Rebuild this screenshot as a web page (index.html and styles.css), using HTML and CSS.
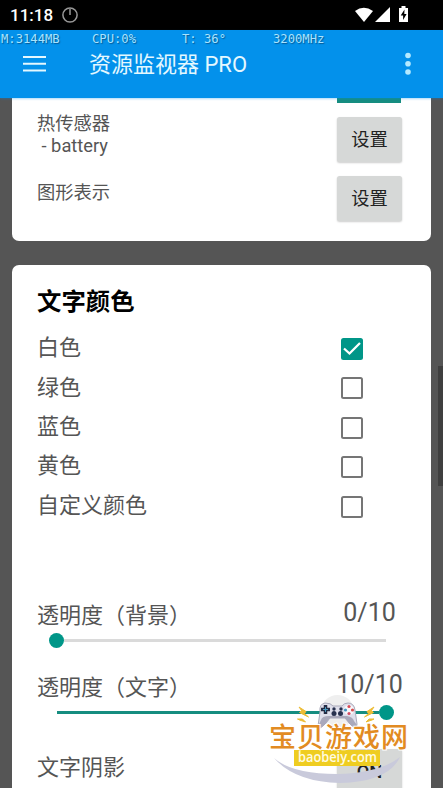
FILE: index.html
```html
<!DOCTYPE html>
<html lang="zh-CN">
<head>
<meta charset="utf-8">
<title>资源监视器 PRO</title>
<link rel="stylesheet" href="styles.css">
</head>
<body>
<div class="screen">
  <div class="status">
    <span class="clock">11:18</span>
    <svg class="power" width="16" height="16" viewBox="0 0 16 16"><circle cx="8" cy="8" r="7.1"/><path d="M8 2v6"/></svg>
    <svg class="signals" width="56" height="18" viewBox="0 0 56 18">
      <path d="M1 5Q9.700-1.500 19 5L10 16Z"/>
      <path d="M36 1V16H21Z"/>
      <path d="M47.500 0h4v2h2.500v14H45V2h2.500Z"/>
      <path class="bolt" d="M50.500 3.500L46.700 9.500h2.400v4.500l3.500-6h-2.300Z"/>
    </svg>
  </div>
  <header class="appbar">
    <div class="metrics"><span>M:3144MB</span><span>CPU:0%</span><span>T: 36°</span><span>3200MHz</span></div>
    <div class="toolbar">
      <svg class="menu" width="23" height="16" viewBox="0 0 23 16"><path d="M0 1h23M0 7.700h23M0 14.500h23"/></svg>
      <h1>资源监视器 PRO</h1>
      <svg class="more" width="6" height="24" viewBox="0 0 6 24"><circle cx="3" cy="3.500" r="2.800"/><circle cx="3" cy="11.700" r="2.800"/><circle cx="3" cy="20" r="2.800"/></svg>
    </div>
  </header>
  <main>
    <section class="card sensors">
      <div class="tab"></div>
      <div class="row"><p>热传感器<br>&nbsp;- battery</p><button>设置</button></div>
      <div class="row second"><p>图形表示</p><button>设置</button></div>
    </section>
    <section class="card colors">
      <h2>文字颜色</h2>
      <div class="option"><span>白色</span><i class="box checked"><svg width="22" height="22" viewBox="0 0 22 22"><path d="M3 10.500L8.500 15.500L19 5"/></svg></i></div>
      <div class="option"><span>绿色</span><i class="box"></i></div>
      <div class="option"><span>蓝色</span><i class="box"></i></div>
      <div class="option"><span>黄色</span><i class="box"></i></div>
      <div class="option"><span>自定义颜色</span><i class="box"></i></div>
      <div class="setting first"><div class="caption"><span>透明度（背景）</span><b>0/10</b></div><div class="slider"><i class="thumb"></i><i class="track"></i></div></div>
      <div class="setting"><div class="caption"><span>透明度（文字）</span><b>10/10</b></div><div class="slider full"><i class="track"></i><i class="thumb"></i></div></div>
      <div class="shadow"><span>文字阴影</span><button>ON</button></div>
    </section>
  </main>
  <div class="scrollbar"></div>
  <svg class="brand" width="150" height="98" viewBox="260 690 150 98">
    <circle cx="337.500" cy="711.500" r="16.500" fill="#efefef"/>
    <path d="M274 758Q292 774 337 774Q380 773 400 757Q388 782 340 783Q295 782 274 758Z" fill="#c9cadb"/>
    <path d="M299 707l7 4.500-1.500 2 4 3.500-9-4.500 2-2ZM374 707l-7 4.500 1.500 2-4 3.500 9-4.500-2-2ZM297.500 719l5 0 3 3-6-2ZM374 719l-5 0-3 3 6-2Z" fill="#edbd36" stroke="#edbd36" stroke-width="1"/>
    <path d="M325 703Q319 704 320 712L318 726Q319 731 326 723L330 718H345L350 724Q357 731 357 724L355 710Q354 703 348 703Q344 703 342 706H333Q331 703 325 703Z" fill="#dfdfeb" stroke="#aaaaba" stroke-width="1"/>
    <path d="M321 720Q322 716 329 716H347Q353 717 354 721L357 725Q354 730 349 723L345 718H330L325 724Q319 730 318 726Z" fill="#aaa9bb"/>
    <path d="M325.500 705v9M321 709.500h9" stroke="#252d46" stroke-width="3.500"/>
    <path d="M325.500 707v5M323 709.500h5" stroke="#4797bc" stroke-width="1"/>
    <g fill="#28314e"><circle cx="334" cy="709" r="1.700"/><circle cx="341" cy="709" r="1.700"/><circle cx="334" cy="713.500" r="2.500"/><circle cx="340.500" cy="713.500" r="2.500"/></g>
    <circle cx="349" cy="710" r="5" fill="#f8f8fb"/>
    <circle cx="349" cy="706.500" r="1.600" fill="#da4c56"/><circle cx="349" cy="713.500" r="1.600" fill="#d34d64"/><circle cx="345.500" cy="710" r="1.600" fill="#4297c2"/><circle cx="352.500" cy="710" r="1.600" fill="#d54d4e"/>
    <rect x="294" y="750" width="86" height="16" fill="#efcd21"/>
    <text class="brandname" x="269" y="746.500" textLength="139">宝贝游戏网</text>
    <text class="domain" x="298" y="762" textLength="79" lengthAdjust="spacingAndGlyphs">baobeiy.com</text>
  </svg>
</div>
</body>
</html>
```
FILE: styles.css
```css
* { box-sizing: border-box; }
body { margin: 0; background: #555; font-family: Roboto, "Noto Sans CJK SC", sans-serif; color: #555; }
.screen { position: relative; width: 443px; height: 788px; overflow: hidden; display: flex; flex-direction: column; }
.status { height: 29.5px; flex: none; background: #000; display: flex; align-items: center; padding: 0 33px 0 10px; color: #fff; }
.clock { font-size: 17px; font-weight: 500; line-height: 30px; width: 52px; }
.power { fill: none; stroke: #999; stroke-width: 1.5; }
.signals { margin-left: auto; margin-top: 1px; fill: #fff; }
.signals .bolt { fill: #000; }
.appbar { position: relative; z-index: 1; height: 68.5px; flex: none; background: #0391eb; color: #e4f8ff; box-shadow: 0 1px 2px #0391eb55; }
.metrics { display: grid; grid-template-columns: 91px 90px 91px 1fr; padding-left: 1px; height: 19px; font: 12.2px/19px "DejaVu Sans Mono", monospace; color: #a8e3ff; text-shadow: 1px 1px 1px #075b96; white-space: pre; }
.toolbar { display: flex; align-items: center; height: 32px; padding: 0 32px 0 23px; }
.menu { fill: none; stroke: #e4f8ff; stroke-width: 2; margin-top: -1px; margin-right: 43px; }
h1 { margin: 0; font-size: 22px; font-weight: 400; line-height: 32px; }
.more { margin-left: auto; margin-top: -1px; fill: #b5eaff; }
main { flex: 1; min-height: 0; padding: 0 12px; }
.card { background: #fff; padding: 0 29px 0 25px; }
.sensors { height: 142.5px; border-radius: 0 0 7px 7px; }
.tab { width: 64px; height: 4.5px; margin-left: auto; margin-right: 1px; background: #168d80; }
.row { display: flex; justify-content: space-between; align-items: flex-start; height: 59px; padding-top: 14.5px; }
.row p { margin: -4px 0 0; font-size: 18.3px; line-height: 22px; }
.row.second p { margin-top: 6px; }
button { flex: none; width: 65px; height: 45px; padding: 0; border: 0; border-radius: 2.5px; background: #d6d8d7; box-shadow: 0 1px 2px #0003; color: #222; font: 18.3px/45px Roboto, "Noto Sans CJK SC", sans-serif; }
.colors { margin-top: 24.5px; height: 560px; border-radius: 7px 7px 0 0; padding-top: 20px; }
h2 { margin: 0; color: #000; font-size: 24.4px; font-weight: 700; line-height: 33px; height: 43px; }
.option { height: 39.4px; display: flex; align-items: center; justify-content: space-between; padding-right: 39px; font-size: 22px; line-height: 39px; }
.box { width: 22px; height: 22px; border: 2px solid #757575; border-radius: 2.5px; margin-top: 2.5px; }
.box.checked { border: 0; background: #009688; }
.box svg { display: block; fill: none; stroke: #fff; stroke-width: 2.3; }
.setting { height: 72.5px; }
.setting.first { margin-top: 74px; }
.caption { display: flex; justify-content: space-between; height: 33.5px; font-size: 22px; line-height: 34px; }
.caption b { width: 65px; display: flex; justify-content: center; font-size: 25px; font-weight: 400; line-height: 28px; }
.slider { display: flex; align-items: center; height: 16px; margin-left: 12px; }
.track { flex: none; height: 3px; width: 322px; background: #dadada; }
.thumb { flex: none; width: 15px; height: 15px; border-radius: 50%; background: #009688; }
.full { margin-left: 20px; }
.full .track { background: #168d80; }
.shadow { display: flex; justify-content: space-between; padding-top: 5px; font-size: 22px; line-height: 37px; }
.shadow button { font-weight: 500; }
.scrollbar { position: absolute; right: 0; top: 366px; width: 5px; height: 120px; background: #3f3f3f; }
.brand { position: absolute; left: 260px; top: 690px; z-index: 2; }
.brandname { font: 500 27px "Noto Sans CJK SC", sans-serif; fill: #e28b22; stroke: #fff; stroke-width: 2px; paint-order: stroke; }
.domain { font: 600 14.5px "Open Sans", sans-serif; fill: #fffbe0; }
```
